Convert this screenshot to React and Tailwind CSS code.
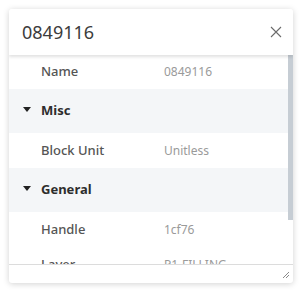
import React from 'react';

function PropRow({ label, value }) {
    return (
        <div className="h-[35px] flex items-center bg-white shrink-0">
            <span className="w-[155px] pl-[32px] text-[13px] text-[#555] font-medium">{label}</span>
            <span className="text-[12px] text-[#9a9a9a]">{value}</span>
        </div>
    );
}

function Section({ title }) {
    return (
        <div className="h-[44px] flex items-center bg-[#f4f6f8] shrink-0">
            <span className="w-[32px] pl-[14px] flex items-center">
                <svg width="8" height="5" viewBox="0 0 8 5" className="-mt-[3px]">
                    <path d="M0 0 H8 L4 5 Z" fill="#222" />
                </svg>
            </span>
            <span className="text-[13px] font-bold text-[#2d2d2d]">{title}</span>
        </div>
    );
}

export default function App() {
    return (
        <div className="w-[301px] h-[292px] bg-white pt-[9px] pl-[9px]" style={{ fontFamily: '"Noto Sans", "Open Sans", sans-serif' }}>
            <div className="w-[284px] h-[274px] bg-white rounded-[3px] shadow-[0_1px_6px_rgba(0,0,0,0.18)] flex flex-col overflow-hidden">
                <div className="h-[46px] flex items-center justify-between pl-[13px] pr-[11px] bg-white relative z-10 shadow-[0_2px_3px_rgba(0,0,0,0.12)] shrink-0">
                    <span className="text-[18px] text-[#3c3c3c]">0849116</span>
                    <svg width="12" height="12" viewBox="0 0 12 12">
                        <path d="M1 1 L11 11 M11 1 L1 11" stroke="#6b6b6b" strokeWidth="1.1" />
                    </svg>
                </div>
                <div className="flex-1 flex overflow-hidden">
                    <div className="flex-1 flex flex-col overflow-hidden">
                        <div className="h-[34px] flex items-center bg-white shrink-0">
                            <span className="w-[155px] pl-[32px] text-[13px] text-[#555] font-medium">Name</span>
                            <span className="text-[12px] text-[#9a9a9a]">0849116</span>
                        </div>
                        <Section title="Misc" />
                        <PropRow label="Block Unit" value="Unitless" />
                        <Section title="General" />
                        <PropRow label="Handle" value="1cf76" />
                        <PropRow label="Layer" value="P1-FILLING" />
                    </div>
                    <div className="w-[5px] flex flex-col">
                        <div className="h-[165px] bg-[#c6cdd4]" />
                    </div>
                </div>
                <div className="h-[19px] border-t border-[#dcdcdc] flex items-end justify-end pr-[4px] pb-[5px] shrink-0">
                    <svg width="7" height="6" viewBox="0 0 7 6">
                        <path d="M1 6 L7 0 M4 6 L7 3" stroke="#8a8a8a" strokeWidth="1" />
                    </svg>
                </div>
            </div>
        </div>
    );
}
